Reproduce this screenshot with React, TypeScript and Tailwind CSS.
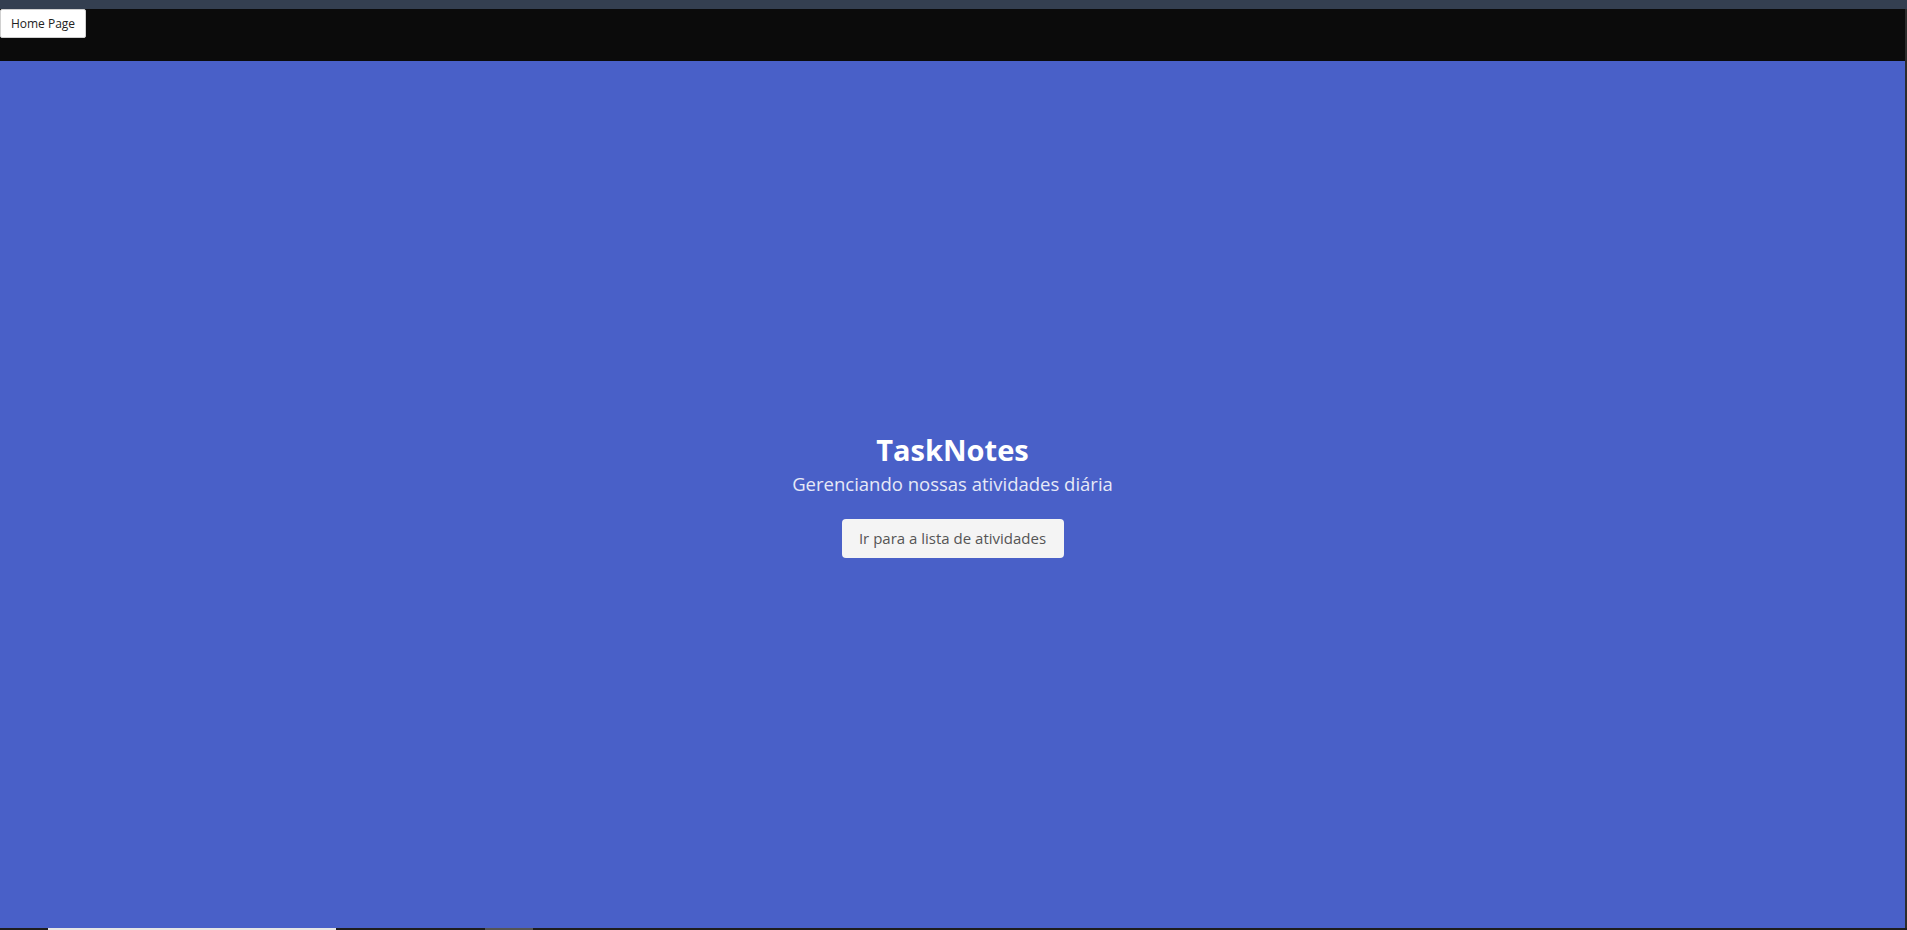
export default function App() {
  return (
    <div className="flex h-[930px] w-[1907px] flex-col overflow-hidden bg-[#1f1f1f] font-['Open_Sans','Noto_Sans',sans-serif]">
      {/* window top strip */}
      <div className="h-[9px] shrink-0 bg-[#343f50]" />

      <div className="flex min-h-0 flex-1">
        <div className="flex min-w-0 flex-1 flex-col">
          {/* Navbar */}
          <header className="h-[52px] shrink-0 bg-[#0b0b0b]">
            <button className="h-[29px] w-[86px] rounded-[2px] border border-[#d0d0d0] bg-white text-[12px] text-[#222]">
              Home Page
            </button>
          </header>

          {/* Hero */}
          <main className="flex flex-1 flex-col items-center justify-center bg-[#4960c8] text-center">
            <h1 className="text-[29px] leading-[38px] font-bold text-white">TaskNotes</h1>
            <p className="text-[18.5px] leading-[30px] text-[#e6e9f7]">
              Gerenciando nossas atividades diária
            </p>
            <button className="mt-[20px] h-[39px] w-[222px] rounded-[4px] bg-[#f4f4f4] text-[15px] text-[#555]">
              Ir para a lista de atividades
            </button>
          </main>
        </div>
        <div className="w-[2px] shrink-0 bg-[#2c2c2c]" />
      </div>

      {/* bottom strip */}
      <div className="relative h-[2px] shrink-0 bg-[#1e1e1e]">
        <div className="absolute left-[48px] top-0 h-[2px] w-[288px] bg-[#e6e6e6]" />
        <div className="absolute left-[485px] top-0 h-[2px] w-[48px] bg-[#555]" />
      </div>
    </div>
  );
}
